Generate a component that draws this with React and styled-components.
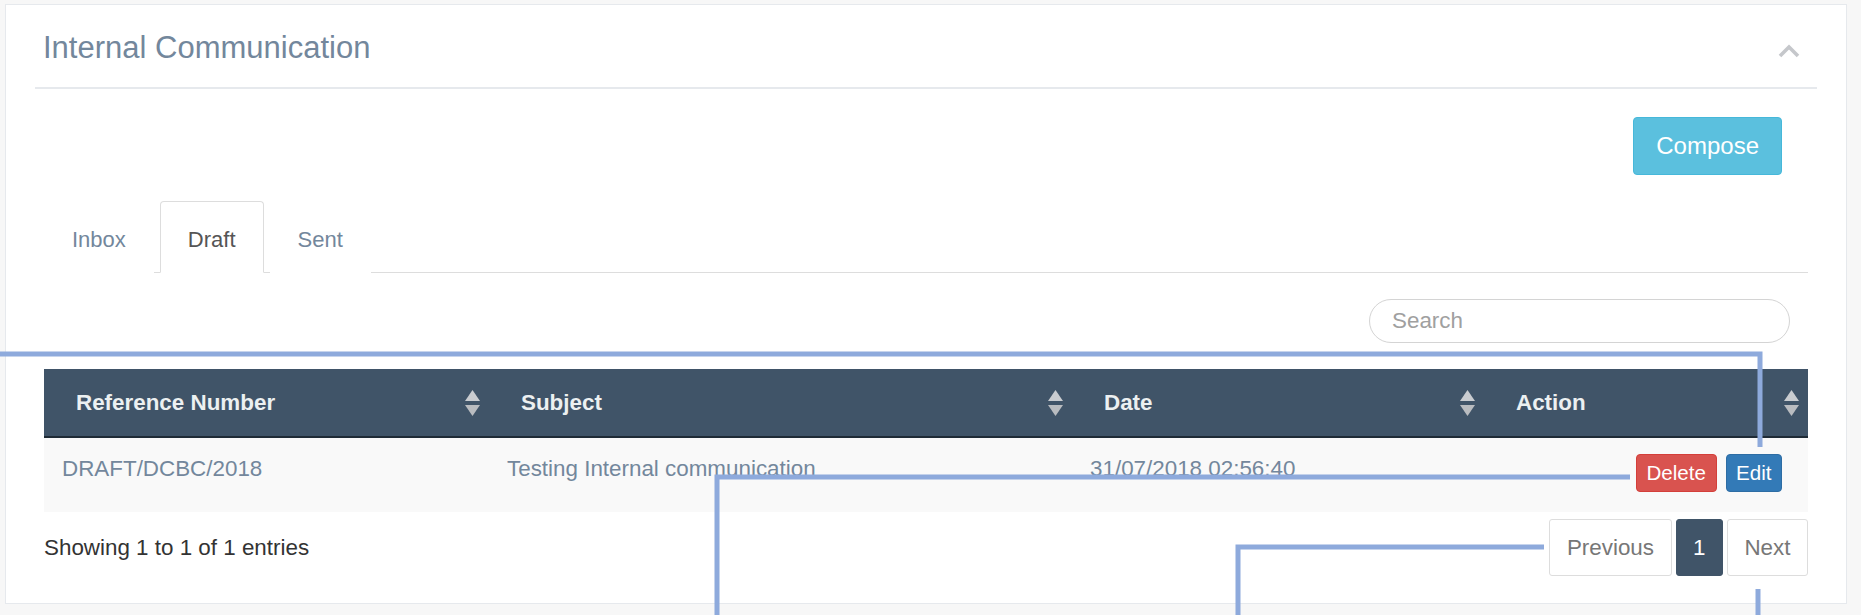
import React from "react";
import styled, { createGlobalStyle } from "styled-components";

const GlobalStyle = createGlobalStyle`
  html, body { margin: 0; padding: 0; }
  body {
    background: #f7f7f7;
    font-family: "Liberation Sans", Arial, sans-serif;
    color: #73879c;
  }
  * { box-sizing: border-box; }
`;

const Page = styled.div`
  position: relative;
  width: 1861px;
  height: 615px;
  padding: 4px 14px 0 5px;
  overflow: hidden;
`;

const Panel = styled.section`
  width: 1842px;
  background: #fff;
  border: 1px solid #e6e9ed;
  padding: 25px 0 27px;
`;

const XTitle = styled.div`
  margin: 0 29px;
  display: flex;
  align-items: center;
  justify-content: space-between;
  padding: 0 17px 21px 8px;
  border-bottom: 2px solid #e6e9ed;
`;

const Title = styled.h2`
  margin: 0;
  font-size: 31px;
  line-height: 36px;
  font-weight: 400;
  color: #73879c;
`;

const Collapse = styled.span`
  display: flex;
  margin-top: 6px;
`;

const Content = styled.div`
  margin: 0 38px;
`;

const ActionBar = styled.div`
  display: flex;
  justify-content: flex-end;
  padding-right: 26px;
  margin-top: 28px;
`;

const Btn = styled.button`
  font-family: "Liberation Sans", Arial, sans-serif;
  color: #fff;
  border: 1px solid ${(p) => p.$border};
  background: ${(p) => p.$bg};
  border-radius: 4px;
  height: ${(p) => p.$h}px;
  padding: 0 ${(p) => p.$px}px;
  font-size: ${(p) => p.$fs}px;
  line-height: 1;
  cursor: pointer;
`;

const Tabs = styled.ul`
  list-style: none;
  margin: 26px 0 0;
  padding: 0;
  display: flex;
  gap: 6px;
  border-bottom: 1px solid #ddd;
  height: 72px;
`;

const Tab = styled.li`
  height: 72px;
  margin-bottom: -1px;
  padding: 25px 27px 0;
  font-size: 22px;
  line-height: 26px;
  border: 1px solid ${(p) => (p.$active ? "#ddd" : "transparent")};
  border-bottom-color: ${(p) => (p.$active ? "#fff" : "transparent")};
  border-radius: 4px 4px 0 0;
  background: #fff;
  color: ${(p) => (p.$active ? "#555" : "#73879c")};
`;

const SearchRow = styled.div`
  display: flex;
  justify-content: flex-end;
  padding-right: 18px;
  margin-top: 26px;
`;

const SearchInput = styled.input`
  width: 421px;
  height: 44px;
  border: 1px solid #d4d4d4;
  border-radius: 22px;
  padding: 0 22px;
  font-family: "Liberation Sans", Arial, sans-serif;
  font-size: 22.4px;
  color: #555;
  outline: none;
  &::placeholder { color: #a0a0a0; }
`;

const Table = styled.table`
  margin-top: 26px;
  width: 1764px;
  table-layout: fixed;
  border-collapse: collapse;
`;

const Th = styled.th`
  height: 68px;
  padding: 0 9px 0 32px;
  background: #405468;
  color: #ecf0f1;
  font-size: 22.4px;
  font-weight: 700;
  text-align: left;
  border-bottom: 2px solid #1f2b36;
`;

const HeadInner = styled.div`
  display: flex;
  align-items: center;
  justify-content: space-between;
`;

const Row = styled.tr`
  background: #f9f9f9;
`;

const Td = styled.td`
  height: 75px;
  vertical-align: top;
  padding: 15px 18px 0;
  font-size: 22.4px;
  line-height: 32px;
  color: #73879c;
  white-space: nowrap;
`;

const ActionCell = styled.td`
  height: 75px;
  vertical-align: top;
  padding: 16px 26px 0 0;
`;

const ActionGroup = styled.div`
  display: flex;
  justify-content: flex-end;
  gap: 9px;
`;

const Footer = styled.div`
  margin-top: 7px;
  display: flex;
  align-items: center;
  justify-content: space-between;
`;

const Info = styled.div`
  font-size: 22.4px;
  color: #333;
`;

const Pager = styled.div`
  display: flex;
  gap: 4px;
`;

const PageBtn = styled.span`
  display: flex;
  align-items: center;
  height: 57px;
  padding: 0 16.5px;
  font-size: 22.4px;
  border: 1px solid ${(p) => (p.$active ? "#405468" : "#ddd")};
  border-radius: 3px;
  background: ${(p) => (p.$active ? "#405468" : "#fff")};
  color: ${(p) => (p.$active ? "#fff" : "#777")};
`;

const Overlay = styled.svg`
  position: absolute;
  left: 0;
  top: 0;
  pointer-events: none;
`;

const SortIcon = () => (
  <svg width="15" height="26" viewBox="0 0 15 26">
    <polygon points="7.5,0 15,11 0,11" fill="#c9ccd0" />
    <polygon points="0,15 15,15 7.5,26" fill="#b9bcc0" />
  </svg>
);

const ChevronUp = () => (
  <svg width="22" height="14" viewBox="0 0 22 14">
    <polyline points="2,12 11,3 20,12" fill="none" stroke="#c5c7cb" strokeWidth="3.6" />
  </svg>
);

const columns = [
  { label: "Reference Number", width: 445 },
  { label: "Subject", width: 583 },
  { label: "Date", width: 412 },
  { label: "Action", width: 324 },
];

const annotations = [
  "0,354 1760,354 1760,447",
  "717,615 717,477 1630,477",
  "1238,615 1238,547 1544,547",
  "1758,589 1758,615",
];

export default function App() {
  return (
    <>
      <GlobalStyle />
      <Page>
        <Panel>
          <XTitle>
            <Title>Internal Communication</Title>
            <Collapse>
              <ChevronUp />
            </Collapse>
          </XTitle>
          <Content>
            <ActionBar>
              <Btn $bg="#5bc0de" $border="#46b8da" $h={58} $px={22} $fs={24}>
                Compose
              </Btn>
            </ActionBar>
            <Tabs>
              <Tab>Inbox</Tab>
              <Tab $active>Draft</Tab>
              <Tab>Sent</Tab>
            </Tabs>
            <SearchRow>
              <SearchInput placeholder="Search" />
            </SearchRow>
            <Table>
              <colgroup>
                {columns.map((c) => (
                  <col key={c.label} style={{ width: c.width }} />
                ))}
              </colgroup>
              <thead>
                <tr>
                  {columns.map((c) => (
                    <Th key={c.label}>
                      <HeadInner>
                        <span>{c.label}</span>
                        <SortIcon />
                      </HeadInner>
                    </Th>
                  ))}
                </tr>
              </thead>
              <tbody>
                <Row>
                  <Td>DRAFT/DCBC/2018</Td>
                  <Td>Testing Internal communication</Td>
                  <Td>31/07/2018 02:56:40</Td>
                  <ActionCell>
                    <ActionGroup>
                      <Btn $bg="#d9534f" $border="#d43f3a" $h={38} $px={9.5} $fs={20.6}>
                        Delete
                      </Btn>
                      <Btn $bg="#337ab7" $border="#2e6da4" $h={38} $px={9.5} $fs={20.6}>
                        Edit
                      </Btn>
                    </ActionGroup>
                  </ActionCell>
                </Row>
              </tbody>
            </Table>
            <Footer>
              <Info>Showing 1 to 1 of 1 entries</Info>
              <Pager>
                <PageBtn>Previous</PageBtn>
                <PageBtn $active>1</PageBtn>
                <PageBtn>Next</PageBtn>
              </Pager>
            </Footer>
          </Content>
        </Panel>
        <Overlay width="1861" height="615" viewBox="0 0 1861 615">
          {annotations.map((pts) => (
            <polyline key={pts} points={pts} fill="none" stroke="#8eaadc" strokeWidth="5" />
          ))}
        </Overlay>
      </Page>
    </>
  );
}
